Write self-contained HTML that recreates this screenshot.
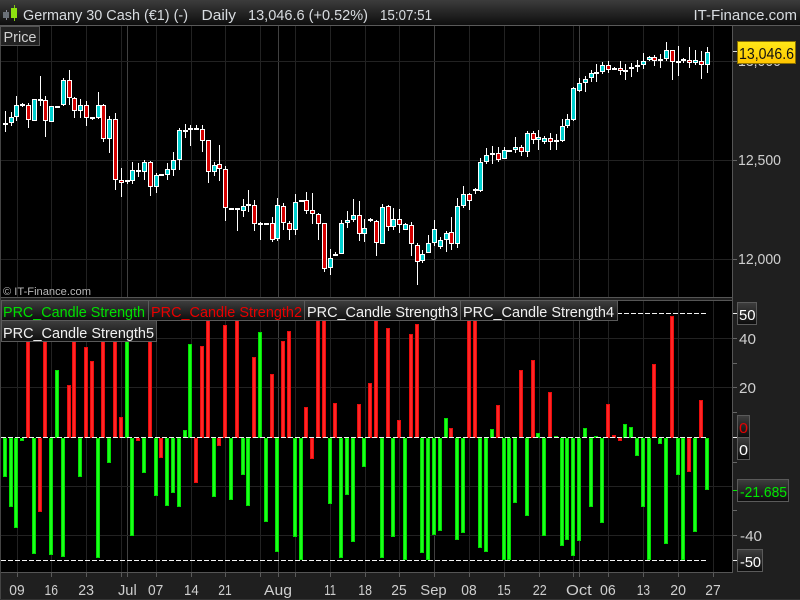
<!DOCTYPE html>
<html><head><meta charset="utf-8"><title>Germany 30 Cash</title>
<style>
html,body{margin:0;padding:0;background:#000;width:800px;height:600px;overflow:hidden}
svg{display:block;position:absolute;left:0;top:0}
text{font-family:"Liberation Sans",sans-serif;font-size:15px}
</style></head><body>
<svg id="s" width="800" height="600" viewBox="0 0 800 600" xmlns="http://www.w3.org/2000/svg">
<defs>
<linearGradient id="tb" x1="0" y1="0" x2="0" y2="1"><stop offset="0" stop-color="#3c3c3c"/><stop offset="1" stop-color="#0e0e0e"/></linearGradient>
<linearGradient id="lg" x1="0" y1="0" x2="0" y2="1"><stop offset="0" stop-color="#3e3e3e"/><stop offset="1" stop-color="#0c0c0c"/></linearGradient>
<linearGradient id="yl" x1="0" y1="0" x2="0" y2="1"><stop offset="0" stop-color="#ffe818"/><stop offset="1" stop-color="#ffc400"/></linearGradient>
</defs>
<rect width="800" height="600" fill="#000"/>
<rect x="733" y="26" width="67" height="574" fill="#1f1f1f"/>
<rect x="0" y="298" width="733" height="3" fill="#1f1f1f"/>
<rect x="0" y="573" width="800" height="27" fill="#1f1f1f"/>
<g id="grid"></g>
<g id="candles" shape-rendering="crispEdges"></g>
<g id="bars" shape-rendering="crispEdges"></g>
<g shape-rendering="crispEdges">
<rect x="0" y="297" width="733" height="1" fill="#555"/>
<rect x="0" y="300" width="733" height="1" fill="#555"/>
<rect x="0" y="572" width="733" height="1" fill="#555"/>
<rect x="732" y="26" width="1" height="547" fill="#555"/>
<rect x="0" y="26" width="1" height="574" fill="#444"/>
<rect x="0" y="599" width="800" height="1" fill="#333"/>
</g>
<rect width="800" height="25" fill="url(#tb)"/>
<rect y="25" width="800" height="1" fill="#5a5a5a"/>
<g shape-rendering="crispEdges">
<rect x="6" y="10" width="1" height="10" fill="#889"/><rect x="3" y="12" width="6" height="6" fill="#6a7078"/>
<rect x="14" y="5" width="1" height="16" fill="#7ecb10"/><rect x="11" y="8" width="6" height="10" fill="#8ee010"/>
</g>
<g fill="#d8dce0">
<text x="23" y="20" textLength="165" lengthAdjust="spacingAndGlyphs">Germany 30 Cash (€1) (-)</text>
<text x="201.5" y="20" textLength="34.5" lengthAdjust="spacingAndGlyphs">Daily</text>
<text x="248" y="20" textLength="120" lengthAdjust="spacingAndGlyphs">13,046.6 (+0.52%)</text>
<text x="380" y="20" textLength="52" lengthAdjust="spacingAndGlyphs">15:07:51</text>
<text x="693.5" y="20" textLength="103.5" lengthAdjust="spacingAndGlyphs">IT-Finance.com</text>
</g>
<rect x="0.5" y="26.5" width="39" height="19" fill="#222" stroke="#555"/>
<text x="3.5" y="42" fill="#d0d0d0" textLength="33" lengthAdjust="spacingAndGlyphs">Price</text>
<text x="3" y="295" fill="#b8b8b8" style="font-size:11px" textLength="88" lengthAdjust="spacingAndGlyphs">© IT-Finance.com</text>
<g fill="#cfcfcf">
<text x="738" y="66" textLength="43" lengthAdjust="spacingAndGlyphs">13,000</text>
<text x="738" y="165" textLength="43" lengthAdjust="spacingAndGlyphs">12,500</text>
<text x="738" y="264" textLength="43" lengthAdjust="spacingAndGlyphs">12,000</text>
<text x="739" y="344" textLength="17" lengthAdjust="spacingAndGlyphs">40</text>
<text x="739" y="393" textLength="17" lengthAdjust="spacingAndGlyphs">20</text>
<text x="740" y="541" textLength="22" lengthAdjust="spacingAndGlyphs">-40</text>
<text x="9.3" y="595" textLength="15.4" lengthAdjust="spacingAndGlyphs">09</text>
<text x="44.5" y="595" textLength="13.5" lengthAdjust="spacingAndGlyphs">16</text>
<text x="78.3" y="595" textLength="15.7" lengthAdjust="spacingAndGlyphs">23</text>
<text x="118" y="595" textLength="18.7" lengthAdjust="spacingAndGlyphs">Jul</text>
<text x="148" y="595" textLength="15.3" lengthAdjust="spacingAndGlyphs">07</text>
<text x="184" y="595" textLength="14.7" lengthAdjust="spacingAndGlyphs">14</text>
<text x="218.3" y="595" textLength="13.4" lengthAdjust="spacingAndGlyphs">21</text>
<text x="264" y="595" textLength="28" lengthAdjust="spacingAndGlyphs">Aug</text>
<text x="324.3" y="595" textLength="11.7" lengthAdjust="spacingAndGlyphs">11</text>
<text x="358.3" y="595" textLength="13.7" lengthAdjust="spacingAndGlyphs">18</text>
<text x="391.3" y="595" textLength="15.4" lengthAdjust="spacingAndGlyphs">25</text>
<text x="420.3" y="595" textLength="26.4" lengthAdjust="spacingAndGlyphs">Sep</text>
<text x="461.3" y="595" textLength="15.4" lengthAdjust="spacingAndGlyphs">08</text>
<text x="497.3" y="595" textLength="13.4" lengthAdjust="spacingAndGlyphs">15</text>
<text x="532.7" y="595" textLength="14" lengthAdjust="spacingAndGlyphs">22</text>
<text x="566" y="595" textLength="25.7" lengthAdjust="spacingAndGlyphs">Oct</text>
<text x="600" y="595" textLength="15.7" lengthAdjust="spacingAndGlyphs">06</text>
<text x="636.7" y="595" textLength="13.3" lengthAdjust="spacingAndGlyphs">13</text>
<text x="670.3" y="595" textLength="15.7" lengthAdjust="spacingAndGlyphs">20</text>
<text x="705.3" y="595" textLength="15.4" lengthAdjust="spacingAndGlyphs">27</text>
</g>
<rect x="737.5" y="41.5" width="58" height="22" fill="url(#yl)" stroke="#8a7000"/>
<text x="739" y="59" fill="#111" textLength="55" lengthAdjust="spacingAndGlyphs" style="font-size:16px">13,046.6</text>
<g stroke="#5a5a5a" fill="url(#lg)">
<rect x="1.5" y="300.5" width="147" height="20"/>
<rect x="148.5" y="300.5" width="156" height="20"/>
<rect x="304.5" y="300.5" width="156" height="20"/>
<rect x="460.5" y="300.5" width="157" height="20"/>
<rect x="1.5" y="320.5" width="155" height="21"/>
<rect x="737.5" y="302.5" width="19" height="22"/>
<rect x="737.5" y="415.5" width="12" height="22"/>
<rect x="737.5" y="437.5" width="12" height="22"/>
<rect x="737.5" y="479.5" width="51" height="22"/>
<rect x="737.5" y="549.5" width="25" height="22"/>
</g>
<text x="3" y="317" fill="#00e000" textLength="142" lengthAdjust="spacingAndGlyphs">PRC_Candle Strength</text>
<text x="151" y="317" fill="#e80000" textLength="151" lengthAdjust="spacingAndGlyphs">PRC_Candle Strength2</text>
<text x="307" y="317" fill="#f0f0f0" textLength="151" lengthAdjust="spacingAndGlyphs">PRC_Candle Strength3</text>
<text x="463" y="317" fill="#f0f0f0" textLength="151" lengthAdjust="spacingAndGlyphs">PRC_Candle Strength4</text>
<text x="3" y="338" fill="#f0f0f0" textLength="151" lengthAdjust="spacingAndGlyphs">PRC_Candle Strength5</text>
<text x="739" y="320" fill="#fff" textLength="16.5" lengthAdjust="spacingAndGlyphs">50</text>
<text x="739" y="433" fill="#e80000" textLength="9" lengthAdjust="spacingAndGlyphs">0</text>
<text x="739" y="455" fill="#fff" textLength="9" lengthAdjust="spacingAndGlyphs">0</text>
<text x="740" y="497" fill="#00e800" textLength="47" lengthAdjust="spacingAndGlyphs">-21.685</text>
<text x="740" y="567" fill="#fff" textLength="21" lengthAdjust="spacingAndGlyphs">-50</text>
</svg>
<script>
function R(x,y,w,h,f){return '<rect x="'+x+'" y="'+y+'" width="'+w+'" height="'+h+'" fill="'+f+'"/>';}
var g='';
var vs=[[17,0],[51,0],[86,0],[121,0],[127,1],[156,0],[191,0],[225,0],[260,0],[278,1],[295,0],[330,0],[365,0],[399,0],[434,1],[469,0],[504,0],[539,0],[573,0],[579,1],[608,0],[643,0],[678,0],[713,0]];
vs.forEach(function(v){var c=v[1]?'#404040':'#222';
 g+=R(v[0],26,1,271,c)+R(v[0],301,1,271,c)+R(v[0],573,1,4,'#5a5a5a');});
[61,160,259,338,387,486,535].forEach(function(y){g+=R(1,y,731,1,'#222');});
[61,160,259,338,363,387,412,462,510,535].forEach(function(y){g+=R(733,y,4,1,'#666');});
g+=R(733,51,4,1,'#ddd')+R(733,313,4,1,'#eee')+R(733,437,4,1,'#eee')+R(733,490,4,1,'#0e0')+R(733,560,4,1,'#eee');
document.getElementById('grid').innerHTML=g;
var C=[[333,370,377,398,'c'],[336,352,370,380,'c'],[288,316,352,365,'c'],[310,314,318,322,'w'],[311,316,361,384,'r'],[297,298,364,364,'c'],[228,298,302,318,'w'],[288,301,364,413,'r'],[320,320,367,367,'c'],[318,319,321,324,'w'],
[235,241,316,320,'c'],[210,241,295,315,'r'],[293,295,334,356,'r'],[297,316,334,354,'c'],[303,316,355,378,'r'],[351,352,357,362,'w'],[276,316,355,358,'c'],[313,316,418,428,'r'],[349,358,418,461,'c'],[339,358,542,572,'r'],
[504,541,550,593,'r'],[540,540,545,552,'w'],[486,511,545,552,'c'],[490,511,517,532,'r'],[480,487,517,540,'c'],[483,487,563,590,'r'],[520,526,563,580,'c'],[522,522,527,527,'w'],[490,508,527,540,'c'],[456,481,512,530,'c'],
[384,391,482,510,'c'],[372,391,393,414,'w'],[375,385,388,438,'w'],[376,384,386,392,'w'],[375,388,425,458,'r'],[420,421,517,550,'r'],[487,496,517,530,'c'],[435,493,508,545,'r'],[498,508,626,665,'r'],[624,625,628,630,'w'],
[624,625,631,695,'r'],[597,619,635,653,'c'],[570,613,620,636,'c'],[600,616,674,693,'r'],[667,669,671,722,'w'],[670,670,677,677,'c'],[651,670,722,728,'r'],[595,616,719,725,'c'],[610,619,671,690,'r'],[665,670,692,720,'r'],
[582,607,692,705,'c'],[600,600,605,605,'w'],[576,601,635,644,'r'],[579,631,643,672,'r'],[639,643,674,720,'r'],[670,670,809,818,'r'],[747,775,806,825,'c'],[758,762,764,768,'w'],[660,670,764,764,'c'],[633,661,670,686,'c'],
[597,646,662,668,'c'],[603,646,704,723,'r'],[657,685,704,728,'c'],[654,658,665,668,'r'],[660,664,731,768,'r'],[612,622,734,734,'c'],[615,619,683,693,'r'],[625,658,683,690,'c'],[627,658,677,701,'r'],[670,673,692,692,'c'],
[666,676,734,770,'r'],[729,736,788,857,'r'],[750,763,785,789,'c'],[705,730,761,761,'c'],[660,688,731,740,'c'],[712,721,743,749,'c'],[693,700,722,758,'c'],[651,697,734,752,'r'],[594,619,734,746,'c'],[558,583,620,626,'c'],
[580,583,605,632,'r'],[566,568,575,582,'r'],[475,487,575,578,'c'],[445,466,488,492,'c'],[438,460,467,494,'c'],[442,460,480,486,'r'],[441,450,479,479,'c'],[450,450,456,456,'w'],[411,441,450,460,'c'],[435,441,458,468,'r'],
[393,400,458,471,'c'],[393,400,421,433,'r'],[390,412,421,450,'c'],[410,415,427,432,'c'],[400,415,428,450,'r'],[403,421,427,450,'c'],[357,379,423,426,'c'],[342,358,380,384,'c'],[261,265,361,365,'c'],[235,250,275,278,'c'],
[228,238,250,276,'c'],[210,220,235,246,'c'],[193,217,220,248,'w'],[188,196,217,224,'c'],[183,196,212,221,'r'],[201,204,205,208,'w'],[183,205,215,225,'r'],[193,211,215,240,'w'],[191,202,208,231,'c'],[181,196,203,218,'c'],
[159,184,196,207,'c'],[168,172,182,184,'c'],[165,172,184,198,'r'],[162,178,185,204,'c'],[126,151,178,183,'c'],[151,151,187,240,'r'],[138,184,187,228,'w'],[174,178,185,189,'c'],[141,181,190,204,'r'],[150,181,191,197,'c'],
[153,184,196,237,'r'],[141,157,196,219,'c']];
var f=function(v){return Math.floor(v/3);},cx=function(i){return Math.floor(5.3+5.8*i);};
var h='';
C.forEach(function(d,i){var x=cx(i),a=f(d[0]),t=f(d[1]),b=f(d[2]),l=f(d[3]);
 h+=R(x,a,1,Math.max(l-a,1),'#fff');
 var ht=Math.max(b-t,2);
 h+=R(x-2,t,5,ht,'#fff');
 if(d[4]!='w'&&ht>2)h+=R(x-1,t+1,3,ht-2,d[4]=='c'?'#00d0d0':'#d40000');
});
document.getElementById('candles').innerHTML=h;
var B=['gd1433','gd1523','gd1586','gd1323','ru900','gd1664','rd1538','ru900','gd1667','gu1110','gd1673','ru1155','ru900','gd1433','ru1041','ru1083','gd1676','ru900','gd1391','ru900',
'ru1251','gu900','gd1610','rd1323','gd1421','ru900','gd1490','rd1376','gd1520','gd1481','gd1523','gu1290','gu1032','rd1451','ru1038','ru900','gd1493','rd1340','ru975','gd1502',
'ru900','gd1427','gd1520','ru1071','gu996','gd1568','ru1122','gd1658','ru1023','ru993','gd1613','gd1682','ru1221','rd1379','ru900','ru900','gd1514','ru1209','gd1676','gd1487',
'gd1628','ru1212','gd1403','ru1149','ru900','gd1676','ru984','gd1613','ru1260','gd1682','ru1002','ru972','gd1661','gd1682','gd1605','gd1595','gu1254','ru1284','gd1622','gd1601',
'ru900','ru900','gd1646','gd1658','gu1287','ru1215','gd1682','gd1682','gd1511','ru1110','gd1550','ru1080','gu1299','gd1610','ru1176','gu1308','gd1640','gd1622','gd1670','gd1625',
'gu1284','gd1523','gu1308','gd1571','ru1212','ru1305','rd1325','gu1272','gu1281','gd1370','gd1523','gd1682','ru1092','gd1334','gd1634','ru948','gd1427','gd1682','rd1418','gd1598',
'ru1200','gd1472'];
var p='';
B.forEach(function(s,i){var x=cx(i)-2,v=f(+s.slice(2)),red=s[0]=='r',y,hh;
 if(s[1]=='u'){y=Math.max(v,301);hh=438-y;}else{y=438;hh=Math.max(v-438,1);}
 p+=R(x,y,4,hh,red?'#ec0c0c':'#00e000');
 if(hh>2)p+=R(x+1,y+1,2,hh-2,red?'#ff2626':'#1cff1c');
});
function dash(y,a,b){for(var x=a;x<b;x+=7)p+=R(x,y,Math.min(5,b-x),1,'#f4f4f4');}
dash(437,1,708);dash(560,1,708);dash(313,617,708);
document.getElementById('bars').innerHTML=p;
</script>
</body></html>
